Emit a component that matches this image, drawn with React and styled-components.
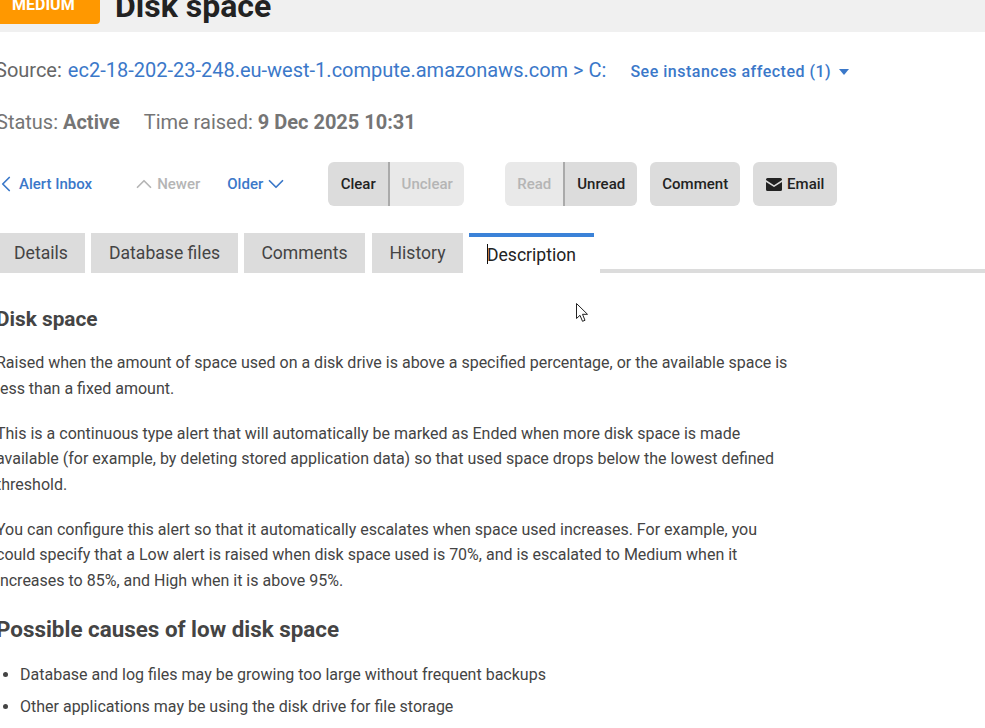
import React from "react";
import styled, { createGlobalStyle } from "styled-components";
import { ChevronLeft, ChevronUp, ChevronDown } from "lucide-react";

const GlobalStyle = createGlobalStyle`
  html, body {
    margin: 0;
    padding: 0;
    height: 100%;
    overflow: hidden;
    background: #fff;
  }
  body {
    font-family: "Roboto", "Liberation Sans", sans-serif;
    color: #444;
  }
`;

const Page = styled.div`
  position: relative;
  width: 985px;
  height: 728px;
  overflow: hidden;
`;

// Title bar, scrolled partly out of view
const Header = styled.header`
  height: 32px;
  background: #f0f0f0;
  display: flex;
  align-items: flex-end;
  gap: 15px;
  overflow: hidden;
`;

const Badge = styled.div`
  width: 100px;
  height: 40px;
  margin-bottom: 8px;
  flex: none;
  box-sizing: border-box;
  padding: 0 0 10px 12px;
  display: flex;
  align-items: flex-end;
  background: #ff9800;
  border-radius: 0 0 4px 0;
  color: #fff;
  font-size: 16px;
  font-weight: 700;
  line-height: 18px;
`;

const Title = styled.h1`
  margin: 0 0 7px;
  font-size: 32px;
  font-weight: 700;
  line-height: 38px;
  color: #222;
`;

const Meta = styled.div`
  display: flex;
  align-items: center;
  height: 24px;
  font-size: 20px;
  line-height: 24px;
  color: #666;
`;

const SourceRow = styled(Meta)`
  margin-top: 26px;
  margin-left: -5px;
`;

const StatusRow = styled(Meta)`
  margin-top: 28px;
  margin-left: -4px;
  gap: 24px;
  color: #757575;

  strong {
    font-weight: 700;
  }
`;

const SourceLink = styled.span`
  margin-left: 6px;
  color: #3b78c9;
`;

const Instances = styled.span`
  margin: 3px 0 0 24px;
  display: inline-flex;
  align-items: center;
  gap: 8px;
  font-size: 16px;
  font-weight: 500;
  letter-spacing: 0.5px;
  color: #3b78c9;
`;

const Caret = styled.i`
  width: 0;
  height: 0;
  border-left: 5.5px solid transparent;
  border-right: 5.5px solid transparent;
  border-top: 6px solid #3b78c9;
`;

const Toolbar = styled.div`
  margin-top: 28px;
  height: 44px;
  display: flex;
  align-items: center;
`;

const NavLink = styled.span`
  display: inline-flex;
  align-items: center;
  margin-left: ${(p) => p.$left}px;
  font-size: 15px;
  font-weight: 500;
  color: ${(p) => (p.$disabled ? "#b5b5b5" : "#3b78c9")};
`;

const ButtonGroup = styled.div`
  display: flex;
  height: 44px;
  margin-left: ${(p) => p.$left}px;
  border-radius: 6px;
  overflow: hidden;
`;

const Button = styled.span`
  width: ${(p) => p.$width}px;
  margin-left: ${(p) => p.$left || 0}px;
  height: 44px;
  display: inline-flex;
  align-items: center;
  justify-content: center;
  gap: 5px;
  font-size: 15px;
  font-weight: 500;
  background: ${(p) => (p.$disabled ? "#e9e9e9" : "#dcdcdc")};
  color: ${(p) => (p.$disabled ? "#b5b5b5" : "#222")};
  border-radius: ${(p) => (p.$solo ? "6px" : "0")};
  border-left: ${(p) => (p.$divided ? "2px solid #aaa" : "0")};
  box-sizing: border-box;
`;

const Tabs = styled.div`
  margin-top: 27px;
  margin-left: -3px;
  height: 40px;
  display: flex;
`;

const Tab = styled.div`
  width: ${(p) => p.$width}px;
  margin-right: ${(p) => p.$gap}px;
  height: 40px;
  flex: none;
  display: flex;
  align-items: center;
  justify-content: center;
  font-size: 17.6px;
  color: #444;
  background: #dcdcdc;
`;

const ActiveTab = styled(Tab)`
  box-sizing: border-box;
  background: #fff;
  border-top: 4px solid #3b82d8;
  color: #222;
`;

const TabRule = styled.div`
  flex: 1;
  margin-left: 6px;
  align-self: flex-end;
  height: 4px;
  background: #dcdcdc;
`;

const Content = styled.article`
  margin-left: -4px;
  width: 802px;
  padding-top: 33px;
  font-size: 16px;
  line-height: 25.5px;
  color: #444;
`;

const Heading = styled.h2`
  margin: 0 0 18px;
  font-size: 20.8px;
  line-height: 26px;
  font-weight: 700;
`;

const SubHeading = styled.h2`
  margin: 22px 0 19px;
  font-size: 22.4px;
  line-height: 28px;
  font-weight: 700;
`;

const Paragraph = styled.p`
  margin: 0 0 19.5px;
`;

const List = styled.ul`
  margin: 0;
  padding-left: 24px;
`;

const ListItem = styled.li`
  margin-bottom: 6.5px;
`;

// Text caret and mouse pointer caught in the capture
const TextCursor = styled.div`
  position: absolute;
  left: 487px;
  top: 244px;
  width: 1px;
  height: 20px;
  background: #111;
`;

const Pointer = styled.svg`
  position: absolute;
  left: 576px;
  top: 303px;
`;

const MailIcon = () => (
  <svg width="16" height="14" viewBox="0 0 16 14" fill="#222">
    <path d="M1.5 1h13A1.5 1.5 0 0 1 16 2.5v.6L8 8.2 0 3.1v-.6A1.5 1.5 0 0 1 1.5 1z" />
    <path d="M0 5l8 5.1L16 5v7.5a1.5 1.5 0 0 1-1.5 1.5h-13A1.5 1.5 0 0 1 0 12.500z" />
  </svg>
);

const App = () => {
  return (
    <Page>
      <GlobalStyle />
      <Header>
        <Badge>MEDIUM</Badge>
        <Title>Disk space</Title>
      </Header>

      <SourceRow>
        Source:
        <SourceLink>ec2-18-202-23-248.eu-west-1.compute.amazonaws.com &gt; C:</SourceLink>
        <Instances>
          See instances affected (1) <Caret />
        </Instances>
      </SourceRow>

      <StatusRow>
        <span>
          Status: <strong>Active</strong>
        </span>
        <span>
          Time raised: <strong>9 Dec 2025 10:31</strong>
        </span>
      </StatusRow>

      <Toolbar>
        <NavLink $left={-7}>
          <ChevronLeft size={26} strokeWidth={1.6} />
          Alert Inbox
        </NavLink>
        <NavLink $left={39} $disabled>
          <ChevronUp size={26} strokeWidth={1.6} />
          Newer
        </NavLink>
        <NavLink $left={27}>
          Older
          <ChevronDown size={26} strokeWidth={1.6} />
        </NavLink>
        <ButtonGroup $left={39}>
          <Button $width={60}>Clear</Button>
          <Button $width={76} $disabled $divided>
            Unclear
          </Button>
        </ButtonGroup>
        <ButtonGroup $left={41}>
          <Button $width={58} $disabled>
            Read
          </Button>
          <Button $width={74} $divided>
            Unread
          </Button>
        </ButtonGroup>
        <Button $width={90} $left={13} $solo>
          Comment
        </Button>
        <Button $width={84} $left={13} $solo>
          <MailIcon />
          Email
        </Button>
      </Toolbar>

      <Tabs>
        <Tab $width={88} $gap={6}>
          Details
        </Tab>
        <Tab $width={147} $gap={6}>
          Database files
        </Tab>
        <Tab $width={121} $gap={7}>
          Comments
        </Tab>
        <Tab $width={91} $gap={6}>
          History
        </Tab>
        <ActiveTab $width={125} $gap={0}>
          Description
        </ActiveTab>
        <TabRule />
      </Tabs>

      <Content>
        <Heading>Disk space</Heading>
        <Paragraph>
          Raised when the amount of space used on a disk drive is above a specified percentage, or the available space is
          less than a fixed amount.
        </Paragraph>
        <Paragraph>
          This is a continuous type alert that will automatically be marked as Ended when more disk space is made
          available (for example, by deleting stored application data) so that used space drops below the lowest defined
          threshold.
        </Paragraph>
        <Paragraph>
          You can configure this alert so that it automatically escalates when space used increases. For example, you
          could specify that a Low alert is raised when disk space used is 70%, and is escalated to Medium when it
          increases to 85%, and High when it is above 95%.
        </Paragraph>
        <SubHeading>Possible causes of low disk space</SubHeading>
        <List>
          <ListItem>Database and log files may be growing too large without frequent backups</ListItem>
          <ListItem>Other applications may be using the disk drive for file storage</ListItem>
        </List>
      </Content>

      <TextCursor />
      <Pointer width="13" height="20" viewBox="0 0 13 20">
        <path d="M0.5 0.5v15l3.500-3.200 2.500 6 2.500-1-2.500-6h5z" fill="#fff" stroke="#222" strokeWidth="1" />
      </Pointer>
    </Page>
  );
};

export default App;
